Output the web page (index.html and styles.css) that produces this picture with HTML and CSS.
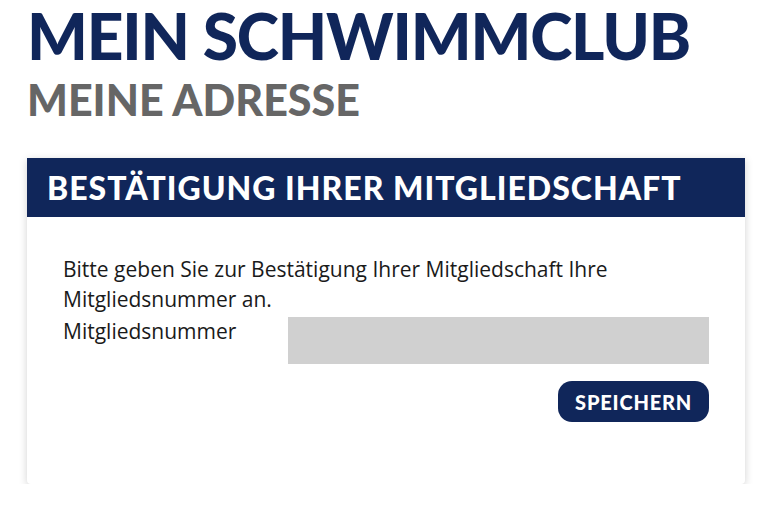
FILE: index.html
```html
<!DOCTYPE html>
<html lang="de">
<head>
    <meta charset="UTF-8">
    <meta name="viewport" content="width=device-width, initial-scale=1.0">
    <title>Mitgliedschaft bestätigen</title>
    <link rel="stylesheet" href="styles.css">
</head>
<body>
    <div class="page">
        <h1 class="club-name">Mein Schwimmclub</h1>
        <h2 class="club-address">Meine Adresse</h2>

        <div class="confirm-card">
            <div class="card-header">
                <h3>Bestätigung Ihrer Mitgliedschaft</h3>
            </div>
            <div class="card-body">
                <p>Bitte geben Sie zur Bestätigung Ihrer Mitgliedschaft Ihre Mitgliedsnummer an.</p>
                <form class="member-form" id="memberForm">
                    <label for="memberNo">Mitgliedsnummer</label>
                    <input type="text" id="memberNo">
                    <button type="button" class="save-btn">Speichern</button>
                </form>
            </div>
        </div>
    </div>
</body>
</html>
```

FILE: styles.css
```css
/* page */
body {
    margin: 0;
    background: #fff;
    font-family: "Open Sans", sans-serif;
    color: #1a1a1a;
}
.page {
    padding: 0 23px 0 27px;
}
.club-name, .club-address, .card-header h3, .save-btn {
    font-family: Lato, sans-serif;
    font-weight: 900;
    text-transform: uppercase;
}
.club-name {
    margin: 0;
    font-size: 64px;
    line-height: 72px;
    letter-spacing: -1.2px;
    color: #10265a;
}
.club-address {
    margin: 0;
    padding-top: 5px;
    font-size: 43px;
    line-height: 46px;
    color: #666;
}

/* card */
.confirm-card {
    margin-top: 35px;
    background: #fff;
    box-shadow: 0 2px 8px rgba(0, 0, 0, 0.18);
    border-radius: 0 0 4px 4px;
}
.card-header {
    background: #10265a;
    height: 59px;
    display: flex;
    align-items: center;
    padding-left: 20px;
}
.card-header h3 {
    margin: 0;
    font-size: 32px;
    letter-spacing: 1px;
    color: #fff;
}
.card-body {
    padding: 37px 36px 62px 36px;
}
.card-body p {
    margin: 0;
    font-size: 21px;
    line-height: 30px;
}
.member-form {
    display: grid;
    grid-template-columns: 225px 1fr;
    row-gap: 17px;
    margin-top: 3px;
}
.member-form label {
    font-size: 21px;
    line-height: 28px;
}
.member-form input {
    height: 47px;
    border: none;
    background: #d0d0d0;
    margin: 0;
    padding: 0 10px;
}
.save-btn {
    grid-column: 2;
    justify-self: end;
    height: 41px;
    padding: 0 17px;
    border: none;
    border-radius: 14px;
    background: #10265a;
    color: #fff;
    font-size: 20px;
    letter-spacing: 0.8px;
    cursor: pointer;
}
```
